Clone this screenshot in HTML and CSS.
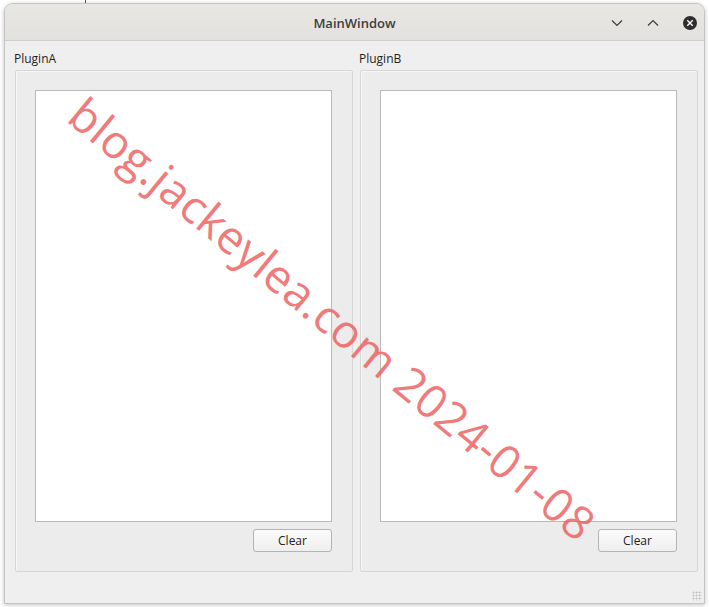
FILE: index.html
```html
<!DOCTYPE html>
<html lang="en">
<head>
    <meta charset="UTF-8">
    <meta name="viewport" content="width=device-width, initial-scale=1.0">
    <title>MainWindow</title>
    <link rel="stylesheet" href="styles.css">
</head>

<body>
    <div class="desk-line top"></div>

    <div class="window">
        <div class="titlebar">
            <span class="title">MainWindow</span>
            <div class="controls">
                <svg class="ctl" width="14" height="14" viewBox="0 0 14 14">
                    <path d="M2 4.5 L7 9.5 L12 4.5" fill="none" stroke="#3c3c3c" stroke-width="1.2"/>
                </svg>
                <svg class="ctl" width="14" height="14" viewBox="0 0 14 14">
                    <path d="M2 9.5 L7 4.5 L12 9.5" fill="none" stroke="#3c3c3c" stroke-width="1.2"/>
                </svg>
                <svg class="ctl" width="16" height="16" viewBox="0 0 16 16">
                    <circle cx="8" cy="8" r="7" fill="#2e2e2e"/>
                    <path d="M5.3 5.3 L10.7 10.7 M10.7 5.3 L5.3 10.7" stroke="#ffffff" stroke-width="1.4"/>
                </svg>
            </div>
        </div>

        <div class="content">
            <div class="plugin">
                <div class="label">PluginA</div>
                <div class="groupbox">
                    <div class="textedit"></div>
                    <div class="button-row">
                        <div class="button">Clear</div>
                    </div>
                </div>
            </div>
            <div class="plugin">
                <div class="label">PluginB</div>
                <div class="groupbox">
                    <div class="textedit"></div>
                    <div class="button-row">
                        <div class="button">Clear</div>
                    </div>
                </div>
            </div>
        </div>

        <div class="grip"></div>
    </div>

    <!-- site stamp drawn across the window -->
    <div class="stamp">blog.jackeylea.com 2024-01-08</div>
</body>
</html>
```

FILE: styles.css
```css
body {
    margin: 0;
    background-color: #ffffff;
    font-family: "Open Sans", "DejaVu Sans", sans-serif;
    width: 709px;
    height: 607px;
    overflow: hidden;
    position: relative;
}

.desk-line.top {
    position: absolute;
    left: 85px;
    top: 0;
    width: 1px;
    height: 4px;
    background-color: #555;
}

.window {
    margin: 3px 0 0 4px;
    width: 701px;
    height: 601px;
    box-sizing: border-box;
    border: 1px solid #c4c4c4;
    border-radius: 9px 9px 0 0;
    background-color: #efefef;
    box-shadow: 0 1px 4px rgba(0, 0, 0, 0.25);
    overflow: hidden;
    display: flex;
    flex-direction: column;
    position: relative;
}

.titlebar {
    height: 36px;
    flex-shrink: 0;
    background: linear-gradient(#e9e7e4, #e3e1dd);
    border-bottom: 1px solid #cfcdc9;
    display: flex;
    align-items: center;
    justify-content: center;
    position: relative;
}

.title {
    font-size: 13px;
    font-weight: 600;
    color: #3d3d3d;
    margin-top: 1px;
}

.controls {
    position: absolute;
    right: 6px;
    top: 11px;
    display: flex;
    align-items: center;
    gap: 22px;
}

.ctl { display: block; }

.content {
    flex: 1;
    display: grid;
    grid-template-columns: 338px 338px;
    gap: 7px;
    padding: 10px 0 0 10px;
}

.label {
    font-size: 12px;
    line-height: 16px;
    height: 16px;
    color: #1e1e1e;
    margin: 0 0 3px -1px;
}

.groupbox {
    height: 502px;
    box-sizing: border-box;
    border: 1px solid #d6d6d6;
    border-radius: 2px;
    background-color: #ececec;
    box-shadow: inset 1px 1px 0 #f7f7f7;
    padding: 19px 20px 19px 19px;
    display: flex;
    flex-direction: column;
    gap: 7px;
}

.textedit {
    flex: 1;
    background-color: #ffffff;
    border: 1px solid #b9b9b9;
}

.button-row {
    display: flex;
    justify-content: flex-end;
}

.button {
    width: 79px;
    height: 23px;
    box-sizing: border-box;
    border: 1px solid #b4b4b4;
    border-radius: 3px;
    background: linear-gradient(#fbfbfb, #efefef);
    font-size: 12px;
    color: #222;
    display: flex;
    justify-content: center;
    align-items: center;
}

.grip {
    position: absolute;
    right: 2px;
    bottom: 2px;
    width: 10px;
    height: 10px;
    background-image: radial-gradient(circle, #c2c2c2 0.8px, transparent 1.2px);
    background-size: 3px 3px;
}

.stamp {
    position: absolute;
    left: 333px;
    top: 318px;
    transform: translate(-50%, -50%) rotate(39.5deg);
    white-space: nowrap;
    font-family: "Open Sans", "DejaVu Sans", sans-serif;
    font-size: 46px;
    color: rgba(238, 92, 92, 0.82);
    letter-spacing: 0.3px;
}
```
